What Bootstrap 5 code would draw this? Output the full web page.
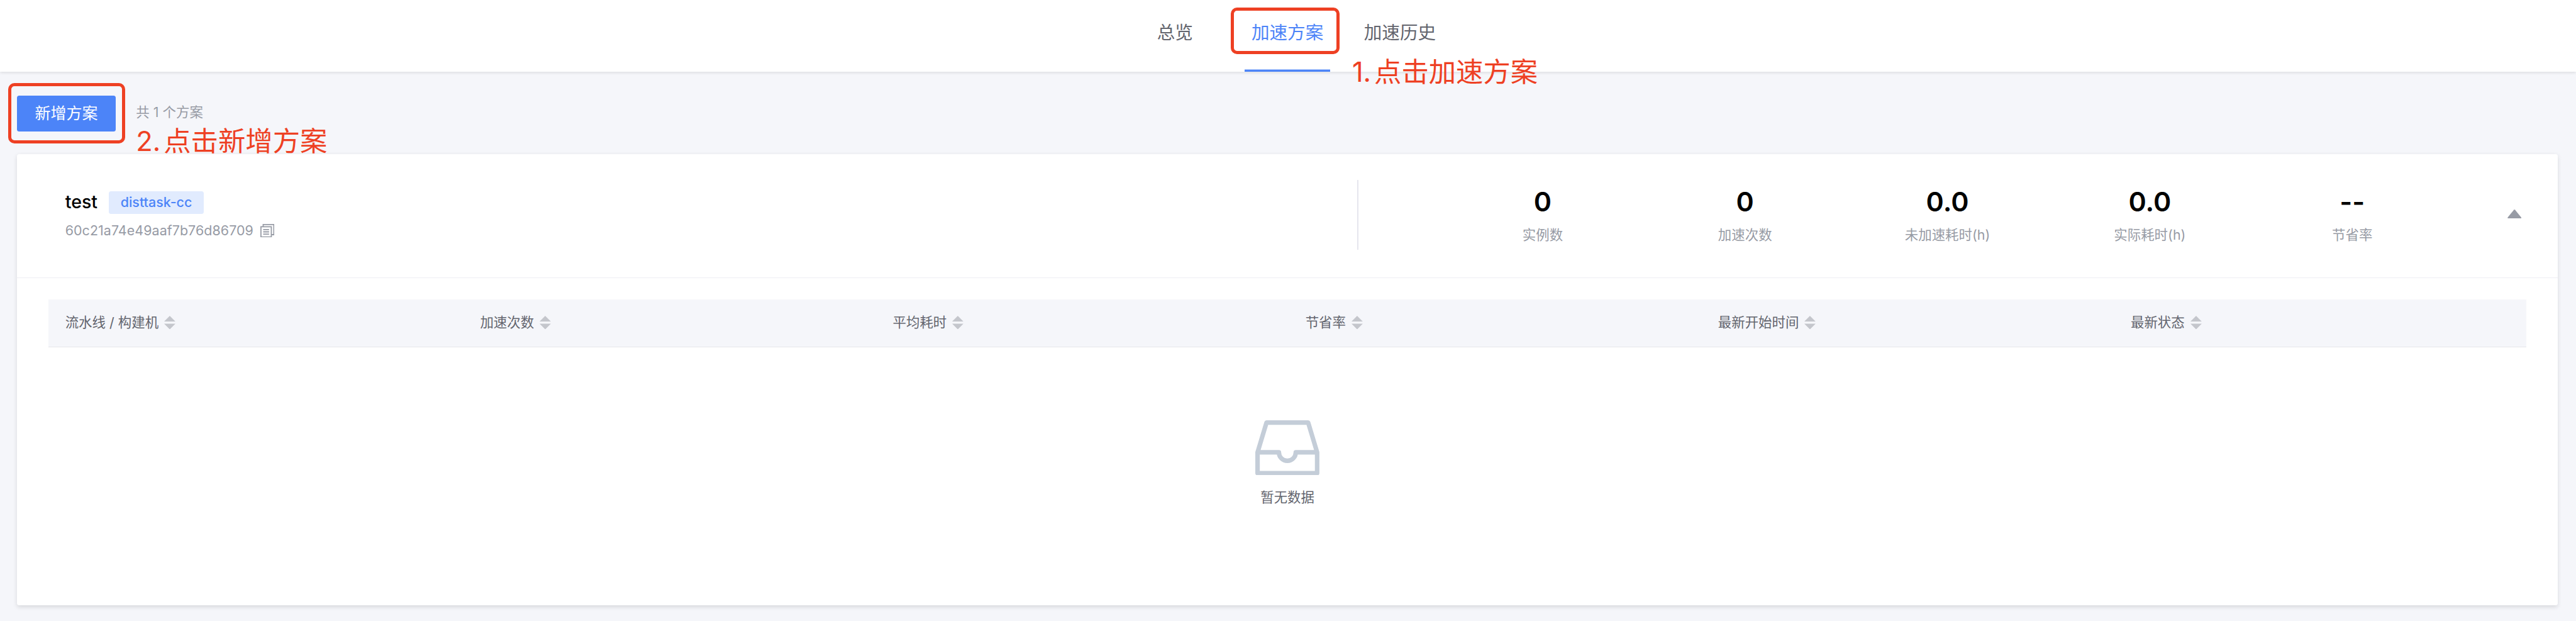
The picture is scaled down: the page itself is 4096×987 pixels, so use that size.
<!DOCTYPE html>
<html lang="zh-CN">
<head>
<meta charset="utf-8">
<title>加速方案</title>
<link href="https://cdn.jsdelivr.net/npm/bootstrap@5.3.0/dist/css/bootstrap.min.css" rel="stylesheet">
<style>
html{font-size:8.9393px}
body{font-family:Inter,"Noto Sans CJK SC",sans-serif;background:#f5f6fa;color:#63656e;font-size:2.4rem;line-height:3.2rem;height:100vh;overflow:hidden}
.top-bar{height:12.8rem;background:#fff;box-shadow:0 .2rem .6rem rgba(0,0,0,.13)}
.tab-item{width:15.2rem;height:12.8rem;font-size:3.2rem;line-height:11.6rem;text-align:center;color:#63656e;text-decoration:none;white-space:nowrap}
.tab-item.active{color:#4c84f8;box-shadow:inset 0 -.4rem #4c84f8}
.tabs{gap:4.8rem;margin-right:.2rem}
.callout-box{position:absolute;border:.6rem solid #ee4023;border-radius:1.1rem}
.callout-tab{left:-2.5rem;top:1.3rem;width:19.4rem;height:8.3rem}
.callout-btn{left:-1.6rem;top:-2.25rem;width:20.9rem;height:10.75rem}
.callout-text{position:absolute;color:#ee4023;font-size:4.85rem;line-height:6rem;white-space:nowrap;word-spacing:-.8rem}
.callout-step1{left:19.1rem;top:9.8rem}
.callout-step2{left:21.2rem;top:5.2rem}
.toolbar{height:14.6rem;padding:4.2rem 3rem 0}
.btn-add{width:17.6rem;height:6.4rem;background:#4c84f8;color:#fff;border:0;border-radius:.4rem;padding:0;font-size:2.8rem;line-height:6.4rem}
.muted{color:#979ba5}
.plan-count{margin:1.4rem 0 0 3.6rem}
.plan-card{margin:0 3.2rem 0 3rem;height:80.2rem;background:#fff;border-radius:.4rem;box-shadow:0 .3rem .8rem rgba(0,0,0,.12)}
.plan-head{height:22rem;border-bottom:.2rem solid #eeeff4}
.plan-info{width:238.4rem;padding:6.6rem 0 0 8.6rem}
.plan-name{width:7.8rem;font-size:3.2rem;line-height:3.9rem;font-weight:500;color:#000}
.plan-tag{height:4rem;line-height:4rem;width:16.8rem;text-align:center;background:#e1ebfe;color:#4c84f8;font-weight:500;border-radius:.4rem}
.plan-id{margin-top:1.4rem}
.plan-id span{width:34.7rem;letter-spacing:.006rem}
.copy-icon{width:2.5rem;height:2.4rem}
.rule{width:.2rem;height:12.4rem;background:#e6e6ee;margin-top:4.6rem}
.stats{margin-left:14.8rem}
.stat{width:36rem;text-align:center;padding-top:5.5rem}
.stat-num{font-size:4.8rem;line-height:6rem;font-weight:580;color:#000}
.stat-label{line-height:3.2rem;margin-top:1.3rem}
.fold{width:2.5rem;height:1.6rem;margin:9.8rem 0 0 9.6rem}
.grid-head{margin:3.8rem 5.6rem 0;height:8.6rem;background:#f5f6fa;border-bottom:.2rem solid #e6e7eb;padding:0 0 .24rem 3rem}
.cell{width:73.4rem;gap:1rem;flex:none}
.cell:first-child{width:73.8rem}
.cell:last-child{width:auto}
.sorter{width:2rem;height:2.4rem}
.empty{padding-top:12.9rem}
.empty svg{width:11.4rem;height:9.8rem}
.empty-text{margin-top:2.35rem}
svg{display:block;flex:none}
</style>
</head>
<body>
<header class="top-bar position-relative d-flex justify-content-center">
  <nav class="tabs d-flex">
    <a class="tab-item">总览</a>
    <a class="tab-item active position-relative">加速方案<span class="callout-box callout-tab"></span><span class="callout-text callout-step1">1. 点击加速方案</span></a>
    <a class="tab-item">加速历史</a>
  </nav>
</header>
<main>
  <div class="toolbar d-flex align-items-start">
    <div class="position-relative">
      <button class="btn btn-add d-block">新增方案</button>
      <span class="callout-box callout-btn"></span>
      <span class="callout-text callout-step2">2. 点击新增方案</span>
    </div>
    <span class="muted plan-count">共 1 个方案</span>
  </div>
  <section class="plan-card">
    <div class="plan-head d-flex align-items-start">
      <div class="plan-info">
        <div class="d-flex"><span class="plan-name">test</span><span class="plan-tag">disttask-cc</span></div>
        <div class="plan-id d-flex align-items-center muted"><span>60c21a74e49aaf7b76d86709</span>
          <svg class="copy-icon" viewBox="0 0 25 24" fill="none" stroke="#979ba5" stroke-width="2"><path d="M5 4V1h19v18h-4M1 5h18.500v18H1zM5 10h10.500M5 14h10.500M5 18h10.500"/></svg></div>
      </div>
      <div class="rule"></div>
      <div class="stats d-flex">
        <div class="stat"><div class="stat-num">0</div><div class="stat-label muted">实例数</div></div>
        <div class="stat"><div class="stat-num">0</div><div class="stat-label muted">加速次数</div></div>
        <div class="stat"><div class="stat-num">0.0</div><div class="stat-label muted">未加速耗时(h)</div></div>
        <div class="stat"><div class="stat-num">0.0</div><div class="stat-label muted">实际耗时(h)</div></div>
        <div class="stat"><div class="stat-num">--</div><div class="stat-label muted">节省率</div></div>
      </div>
      <svg class="fold" viewBox="0 0 25 16"><path d="M11.500.6q1-1 2 0L24.500 14q.6 2-1 2h-22q-1.600 0-1-2z" fill="#979ba5"/></svg>
    </div>
    <div class="grid-head d-flex align-items-center">
      <div class="cell d-flex align-items-center"><span>流水线 / 构建机</span><svg class="sorter" viewBox="0 0 20 24"><path d="M10 0 20 10H0zM0 14h20L10 24z" fill="#c4c6cc"/></svg></div>
      <div class="cell d-flex align-items-center"><span>加速次数</span><svg class="sorter" viewBox="0 0 20 24"><path d="M10 0 20 10H0zM0 14h20L10 24z" fill="#c4c6cc"/></svg></div>
      <div class="cell d-flex align-items-center"><span>平均耗时</span><svg class="sorter" viewBox="0 0 20 24"><path d="M10 0 20 10H0zM0 14h20L10 24z" fill="#c4c6cc"/></svg></div>
      <div class="cell d-flex align-items-center"><span>节省率</span><svg class="sorter" viewBox="0 0 20 24"><path d="M10 0 20 10H0zM0 14h20L10 24z" fill="#c4c6cc"/></svg></div>
      <div class="cell d-flex align-items-center"><span>最新开始时间</span><svg class="sorter" viewBox="0 0 20 24"><path d="M10 0 20 10H0zM0 14h20L10 24z" fill="#c4c6cc"/></svg></div>
      <div class="cell d-flex align-items-center"><span>最新状态</span><svg class="sorter" viewBox="0 0 20 24"><path d="M10 0 20 10H0zM0 14h20L10 24z" fill="#c4c6cc"/></svg></div>
    </div>
    <div class="empty d-flex flex-column align-items-center">
      <svg viewBox="0 0 114 98" fill="none" stroke="#c4cdd8" stroke-width="8" stroke-linejoin="round"><path d="M4 57 20 4h74l16 53v37H4zM4 57h38a15 15 0 0 0 30 0h38"/></svg>
      <div class="empty-text">暂无数据</div>
    </div>
  </section>
</main>
<script src="https://cdn.jsdelivr.net/npm/bootstrap@5.3.0/dist/js/bootstrap.bundle.min.js"></script>
</body>
</html>
